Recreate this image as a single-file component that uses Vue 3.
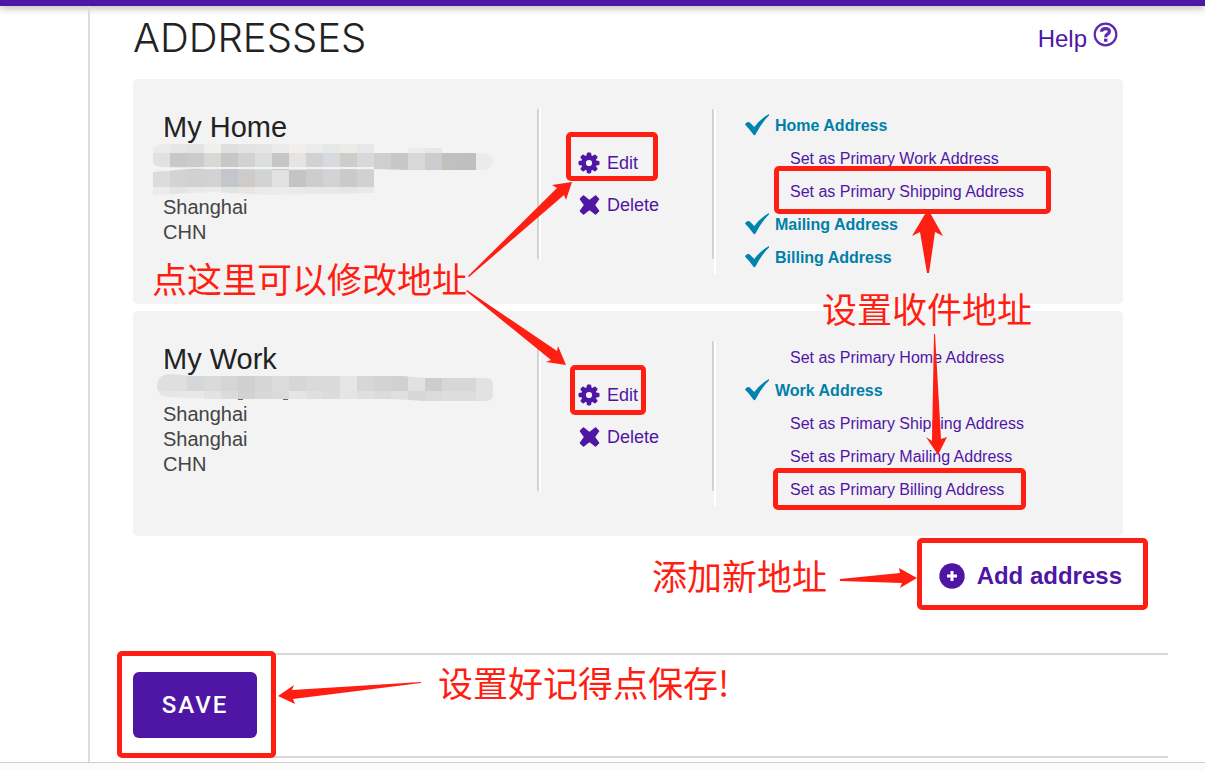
<script setup>
const CELL = 17

const cards = [
  {
    title: 'My Home',
    lines: ['Shanghai', 'CHN'],
    mask: {
      id: 'mask-home',
      height: 50,
      clip: 'M8 -1 H221 V8 H255 V3 H289 V8 H331 Q340 9 340 16 Q340 23 332 25 H255 L221 24 V48 L170 49 L120 50 L60 47 L0 50 V27 L50 23 L8 22 Q0 21 0 15 V8 Q0 0 8 -1Z',
      bands: [
        { y: -1, h: 9, from: 0, colors: ['ebebeb', 'e6e6e6', 'e3e3e3', 'efefef', 'e0dfdd', 'e3e3e3', 'e4e4e4', 'e9eaea', 'f0efee', 'ebecec', 'e6e8e8', 'ebebe9', 'e6e8e7'] },
        { y: 3, h: 5, from: 15, colors: ['ececec', 'e6e8e7'] },
        { y: 8, h: 17, from: 0, colors: ['e1e1e1', 'c8c8c8', 'cbcbcb', 'd9d8d5', 'c8c7c7', 'd2d2d2', 'dcdedd', 'c6c6c6', 'e5e4e2', 'd0d2d4', 'd8dadd', 'cfccc9', 'd7d9dc', 'cfcfcd', 'c6c8c7', 'dad8d6', 'cacccf', 'c2c0bd', 'bebfc1', 'ebebeb'] },
        { y: 22, h: 2, from: 0, colors: Array(13).fill('f3f3f3') },
        { y: 25, h: 17, from: 0, colors: ['dddbdb', 'd3d3d3', 'd1d1d1', 'd3d2d2', 'c3c6ca', 'cecbc8', 'd2d3d5', 'e0e1e3', 'c6c4c3', 'cdcdcd', 'd2d4d3', 'cacaca', 'd1d1d1'] },
        { y: 42, h: 8, from: 0, colors: ['ebebeb', 'e4e4e4', 'e8e8e8', 'ebebeb', 'e3e3e3', 'e6e6e6', 'eaeaea', 'ececec', 'eaeaea', 'e8e8e8', 'e8e8e8', 'e6e6e6', 'e9e9e9'] }
      ],
      tails: []
    },
    roles: [
      { label: 'Home Address', active: true },
      { label: 'Set as Primary Work Address' },
      { label: 'Set as Primary Shipping Address' },
      { label: 'Mailing Address', active: true },
      { label: 'Billing Address', active: true }
    ]
  },
  {
    title: 'My Work',
    lines: ['Shanghai', 'Shanghai', 'CHN'],
    mask: {
      id: 'mask-work',
      height: 25,
      clip: 'M16 -3 L40 -1 H250 L272 1 H333 Q340 1 340 7 V17 Q340 24 333 24 H272 L240 22 H60 L16 20 Q4 19 4 9 Q4 -2 16 -3Z',
      bands: [
        { y: -3, h: 17, from: 0, colors: ['e0e0e0', 'dfdfdf', 'd6d7da', 'dadada', 'd5d5d5', 'd0d0d0', 'd5d5d3', 'dadcdb', 'd6d6d6', 'd9dbda', 'dadada', 'e6e6e6', 'd7d7d7', 'd2d3d3', 'cfd2d4', 'e2e2e2', 'cfccca', 'd6d8d7', 'd9d7d5', 'e2e2e2'] },
        { y: 14, h: 10, from: 0, colors: ['e5e5e5', 'e7e7e7', 'e9e9e9', 'e3e3e3', 'dcdbda', 'd1d3d2', 'd8d8d8', 'dadad9', 'e4e5e6', 'dedfde', 'dcdcdc', 'e5e5e5', 'dfdfdf', 'dcdcdc', 'dfdfe0', 'd8d7d5', 'dbdbdb', 'dddddd', 'dcdddc', 'e1e3e2'] }
      ],
      tails: [85, 130, 258]
    },
    roles: [
      { label: 'Set as Primary Home Address' },
      { label: 'Work Address', active: true },
      { label: 'Set as Primary Shipping Address' },
      { label: 'Set as Primary Mailing Address' },
      { label: 'Set as Primary Billing Address' }
    ]
  }
]

const boxes = [
  [566, 132, 92, 49],
  [570, 365, 76, 50],
  [774, 166, 277, 48],
  [773, 468, 253, 42],
  [917, 538, 231, 72],
  [117, 651, 159, 107]
]

const arrows = [
  '468,276 557,188 552,185 572,182 566,200 564,195 469,277',
  '467,290 557,351 558,346 566,365 546,362 551,360 466,291',
  '928,209 943,236 935,232 929,273 927,273 920,232 912,236',
  '934,334 935,334 941,439 947,437 938,455 926,437 932,441',
  '840,579 900,573 899,568 917,578 900,588 902,583 840,581',
  '421,682 292,690 294,685 278,696 295,704 293,699 421,683'
]

const notes = [
  { key: 'note-edit', text: '点这里可以修改地址' },
  { key: 'note-ship', text: '设置收件地址' },
  { key: 'note-add', text: '添加新地址' },
  { key: 'note-save', text: '设置好记得点保存!' }
]
</script>

<template>
  <div class="page">
    <div class="topbar"></div>
    <div class="body">
      <aside class="side"></aside>
      <main class="main">
        <header class="head">
          <h1>ADDRESSES</h1>
          <a class="help" href="#">
            <span>Help</span>
            <svg width="25" height="25" viewBox="0 0 25 25" fill="none" stroke="#5c2bb0" aria-hidden="true">
              <circle cx="12.5" cy="12.5" r="10.8" stroke-width="2.2" />
              <path d="M8.5 9.8 Q8.6 6.600 12.6 6.600 Q16.4 6.600 16.4 9.5 Q16.4 11 14.4 12.2 Q12.7 13.2 12.7 15.2" stroke-width="3.2" />
              <path d="M12.7 16.6 V19.8" stroke-width="3.4" />
            </svg>
          </a>
        </header>

        <section class="cards">
          <article v-for="card in cards" :key="card.title" class="card">
            <div class="info">
              <h2>{{ card.title }}</h2>
              <svg class="mask" width="340" :height="card.mask.height" aria-hidden="true">
                <clipPath :id="card.mask.id"><path :d="card.mask.clip" /></clipPath>
                <rect v-for="t in card.mask.tails" :key="t" :x="t" y="22" width="5" height="1" fill="#666" />
                <g :clip-path="`url(#${card.mask.id})`" shape-rendering="crispEdges">
                  <template v-for="(band, b) in card.mask.bands" :key="b">
                    <rect
                      v-for="(c, i) in band.colors"
                      :key="i"
                      :x="(band.from + i) * CELL"
                      :y="band.y"
                      :width="CELL"
                      :height="band.h"
                      :fill="'#' + c"
                    />
                  </template>
                </g>
              </svg>
              <p v-for="(line, i) in card.lines" :key="i">{{ line }}</p>
            </div>
            <div class="actions">
              <button type="button">
                <svg width="22" height="22" viewBox="-11 -11 22 22" aria-hidden="true">
                  <g fill="#4f16a6">
                    <rect v-for="a in [0, 45, 90, 135]" :key="a" x="-2.3" y="-10.5" width="4.6" height="21" rx="1.4" :transform="`rotate(${a})`" />
                    <circle r="7.9" />
                  </g>
                  <circle r="3.1" fill="#f3f3f3" />
                </svg>
                Edit
              </button>
              <button type="button">
                <svg width="22" height="22" viewBox="-11 -11 22 22" aria-hidden="true">
                  <path d="M-5.5 -9 L0.5 -4.2 L6.5 -9 L9.5 -6 L5.2 0 L9.5 6 L6.5 9 L0.5 4.2 L-5.5 9 L-8.5 6 L-4.2 0 L-8.5 -6Z" fill="#4f16a6" stroke="#4f16a6" stroke-width="1.6" stroke-linejoin="round" />
                </svg>
                Delete
              </button>
            </div>
            <ul class="roles">
              <li v-for="role in card.roles" :key="role.label">
                <template v-if="role.active">
                  <svg width="24" height="24" viewBox="0 0 24 24" aria-hidden="true">
                    <path d="M0 10.5 Q1.5 7 4.5 8.2 L9.3 13 Q15 5 24 0 V1.5 Q17 8 10.5 20.5 Q9.5 22 8.5 20.8 Q4 14.5 0 10.5Z" fill="#0083ad" />
                  </svg>
                  <strong>{{ role.label }}</strong>
                </template>
                <a v-else href="#">{{ role.label }}</a>
              </li>
            </ul>
          </article>
        </section>

        <div class="add-row">
          <button type="button" class="add">
            <svg width="26" height="26" viewBox="0 0 26 26" aria-hidden="true">
              <circle cx="13" cy="13" r="12.7" fill="#4f16a6" />
              <path d="M13 8 V18 M8 13 H18" stroke="#fff" stroke-width="3" />
            </svg>
            Add address
          </button>
        </div>

        <div class="save-row">
          <button type="button" class="save">SAVE</button>
        </div>
      </main>
    </div>
    <footer class="foot"></footer>

    <svg class="marks" width="1205" height="771" aria-hidden="true">
      <rect
        v-for="(b, i) in boxes"
        :key="'b' + i"
        :x="b[0] + 2.5"
        :y="b[1] + 2.5"
        :width="b[2] - 5"
        :height="b[3] - 5"
        rx="2.5"
        fill="none"
        stroke="#ff1e12"
        stroke-width="5"
      />
      <polygon v-for="(p, i) in arrows" :key="'a' + i" :points="p" fill="#ff1e12" />
    </svg>
    <span v-for="n in notes" :key="n.key" class="note" :class="n.key">{{ n.text }}</span>
  </div>
</template>

<style>
body {
  margin: 0;
  background: #fff;
}
</style>

<style scoped>
.page {
  position: relative;
  display: flex;
  flex-direction: column;
  min-height: 100vh;
  overflow: hidden;
  color: #222;
  font-family: "Liberation Sans", Arial, sans-serif;
}
.topbar {
  height: 6px;
  background: #4f16a6;
  box-shadow: 0 1px 8px rgba(0, 0, 0, 0.4);
}
.body {
  display: flex;
}
.side {
  flex: none;
  width: 88px;
  border-right: 2px solid #dcdcdc;
}
.main {
  flex: 1;
  padding: 0 37px 4px 43px;
}
.head {
  display: flex;
  justify-content: space-between;
  align-items: flex-start;
  height: 73px;
  margin-right: 50px;
}
h1,
h2,
p,
ul {
  margin: 0;
  padding: 0;
}
h1 {
  padding-top: 8px;
  font-family: Inter, "Liberation Sans", sans-serif;
  font-size: 40px;
  font-weight: 300;
  line-height: 48px;
}
.help {
  display: flex;
  gap: 6px;
  padding-top: 16px;
  color: #4f16a6;
  font-size: 24px;
  line-height: 34px;
  text-decoration: none;
}
.cards {
  display: grid;
  gap: 7px;
  margin-right: 45px;
}
.card {
  display: grid;
  grid-template-columns: 376px 175px 1fr;
  align-items: start;
  padding: 30px;
  border-radius: 5px;
  background: #f3f3f3;
}
.info,
.actions {
  box-sizing: border-box;
  height: 150px;
  border-right: 2px solid #d3d3d3;
}
h2 {
  font-size: 29px;
  font-weight: 400;
  line-height: 36px;
}
.mask {
  display: block;
  margin-left: -10px;
  overflow: visible;
}
.info p {
  color: #444;
  font-size: 20px;
  line-height: 25px;
}
button {
  padding: 0;
  border: 0;
  background: none;
  color: #4f16a6;
  font-family: inherit;
  cursor: pointer;
}
.actions {
  padding: 33px 0 0 37px;
  border-left: 2px solid #fff;
}
.actions button {
  display: flex;
  align-items: center;
  gap: 7px;
  height: 42px;
  font-size: 18px;
}
.roles {
  padding-left: 29px;
  border-left: 2px solid #fff;
  list-style: none;
  font-size: 16px;
}
.roles li {
  display: flex;
  align-items: center;
  gap: 6px;
  height: 33px;
}
.roles strong {
  color: #007fa8;
}
.roles a {
  margin-left: 45px;
  color: #4f16a6;
  text-decoration: none;
}
.add-row {
  display: flex;
  justify-content: flex-end;
  height: 97px;
  margin-right: 46px;
  padding-top: 20px;
}
.add {
  display: flex;
  align-items: center;
  gap: 12px;
  height: 40px;
  font-size: 24px;
  font-weight: 700;
}
.save-row {
  padding: 17px 0 18px;
  border-top: 2px solid #d8d8d8;
  border-bottom: 2px solid #d8d8d8;
}
.save {
  display: block;
  width: 124px;
  height: 66px;
  border-radius: 6px;
  background: #4f16a6;
  color: #fff;
  font-family: Roboto, sans-serif;
  font-size: 24px;
  font-weight: 500;
  letter-spacing: 2px;
}
.foot {
  flex: 1;
  border-top: 1px solid #ccd1cf;
  background: #fbfbfb;
}
.marks {
  position: absolute;
  top: 0;
  left: 0;
  pointer-events: none;
}
.note {
  position: absolute;
  color: #ff1e12;
  font-family: "Noto Sans CJK SC", sans-serif;
  font-size: 35px;
  font-weight: 400;
  line-height: 40px;
  white-space: nowrap;
}
.note-edit {
  top: 258px;
  left: 152px;
}
.note-ship {
  top: 288px;
  left: 822px;
}
.note-add {
  top: 555px;
  left: 652px;
}
.note-save {
  top: 662px;
  left: 438px;
}
</style>
